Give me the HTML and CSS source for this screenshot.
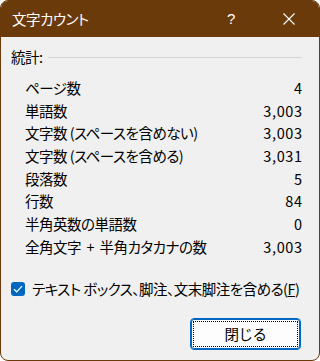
FILE: index.html
```html
<!DOCTYPE html>
<html lang="ja">

<head>
    <meta charset="UTF-8">
    <meta name="viewport" content="width=device-width, initial-scale=1.0">
    <title>文字カウント</title>
    <link rel="stylesheet" href="styles.css">
</head>

<body>

    <div class="window">
        <div class="titlebar">
            <span class="title">文字カウント</span>
            <span class="help">?</span>
            <svg class="close" width="12" height="12" viewBox="0 0 12 12">
                <path d="M0.5 0.5 L11.5 11.5 M11.5 0.5 L0.5 11.5" stroke="#fff" stroke-width="1.1" fill="none"/>
            </svg>
        </div>

        <div class="content">
            <div class="group-head">
                <span>統計:</span>
                <span class="rule"></span>
            </div>

            <div class="stats">
                <div class="row"><span>ページ数</span><span class="num">4</span></div>
                <div class="row"><span>単語数</span><span class="num">3,003</span></div>
                <div class="row"><span>文字数 (スペースを含めない)</span><span class="num">3,003</span></div>
                <div class="row"><span>文字数 (スペースを含める)</span><span class="num">3,031</span></div>
                <div class="row"><span>段落数</span><span class="num">5</span></div>
                <div class="row"><span>行数</span><span class="num">84</span></div>
                <div class="row"><span>半角英数の単語数</span><span class="num">0</span></div>
                <div class="row"><span>全角文字&nbsp; + &nbsp;半角カタカナの数</span><span class="num">3,003</span></div>
            </div>

            <label class="check">
                <span class="box">
                    <svg width="10" height="8" viewBox="0 0 10 8">
                        <path d="M1 4.2 L3.7 6.8 L9 1.2" stroke="#fff" stroke-width="1.2" fill="none"/>
                    </svg>
                </span>
                <span class="check-text">テキスト ボックス、脚注、文末脚注を含める(<u>F</u>)</span>
            </label>

            <div class="actions">
                <button type="button" class="btn"><span class="focus">閉じる</span></button>
            </div>
        </div>
    </div>

</body>

</html>
```

FILE: styles.css
```css
body {
    margin: 0;
    background-color: #fff;
    font-family: 'Noto Sans CJK JP', 'Noto Sans', sans-serif;
    font-size: 14.5px;
    letter-spacing: -0.5px;
    font-feature-settings: "palt";
    color: #000;
}

.window {
    width: 320px;
    height: 361px;
    box-sizing: border-box;
    border: 1px solid #6b3a0b;
    border-radius: 8px;
    background-color: #f0f0f0;
    overflow: hidden;
    display: flex;
    flex-direction: column;
}

.titlebar {
    flex-shrink: 0;
    height: 37px;
    margin: -1px -1px 0;
    background-color: #6b3a0b;
    color: #fff;
    display: flex;
    align-items: center;
    padding: 0 0 0 12px;
}

.title {
    flex: 1;
    line-height: 20px;
}

.help {
    font-family: 'Liberation Sans', sans-serif;
    font-size: 15px;
    font-weight: 300;
    width: 12px;
    margin-right: 44px;
}

.close {
    margin-right: 25px;
}

.content {
    padding: 10px 17px 0 10px;
    display: flex;
    flex-direction: column;
}

.group-head {
    display: flex;
    align-items: center;
    line-height: 20px;
}

.rule {
    flex: 1;
    height: 1px;
    margin-left: 5px;
    background-color: #d5d5d5;
}

.stats {
    margin-top: 10px;
    padding-left: 14px;
}

.row {
    display: flex;
    justify-content: space-between;
    line-height: 22.7px;
    height: 22.7px;
}

.num {
    letter-spacing: 0.6px;
    margin-right: -0.6px;
}

.check {
    display: flex;
    align-items: center;
    gap: 7px;
    margin-top: 20px;
    line-height: 20px;
    white-space: nowrap;
}

.box {
    flex-shrink: 0;
    width: 14px;
    height: 14px;
    border-radius: 3px;
    background-color: #0067c0;
    display: flex;
    align-items: center;
    justify-content: center;
}

.actions {
    display: flex;
    justify-content: flex-end;
    margin-top: 19px;
    padding-right: 1px;
}

.btn {
    width: 111px;
    height: 32px;
    padding: 2px;
    border: 1px solid #0067c0;
    box-shadow: 0 0 0 1px #0067c0 inset;
    border-radius: 4px;
    background-color: #fdfdfd;
    font-family: inherit;
    font-size: 14.5px;
    letter-spacing: inherit;
    color: #000;
}

.focus {
    display: flex;
    align-items: center;
    justify-content: center;
    height: 100%;
    box-sizing: border-box;
    border: 1px dotted #000;
}
```
